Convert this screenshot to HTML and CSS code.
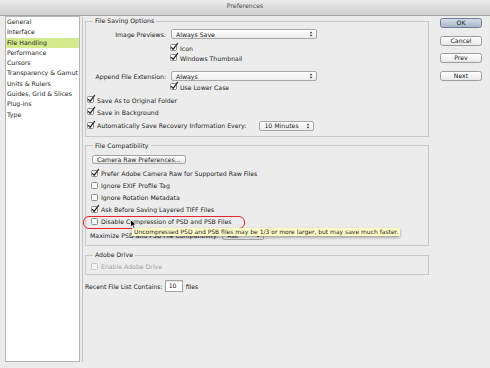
FILE: index.html
```html
<!DOCTYPE html>
<html>
  <head>
    <meta charset="utf-8">
    <title>Preferences</title>
    <link rel="stylesheet" href="styles.css">
  </head>
  <body>
    <div class="titlebar">Preferences</div>
    <div class="content">
      <ul class="nav">
        <li>General</li>
        <li>Interface</li>
        <li class="active">File Handling</li>
        <li>Performance</li>
        <li>Cursors</li>
        <li>Transparency &amp; Gamut</li>
        <li>Units &amp; Rulers</li>
        <li>Guides, Grid &amp; Slices</li>
        <li>Plug-ins</li>
        <li>Type</li>
      </ul>

      <div class="panel">
        <fieldset class="group saving">
          <legend>File Saving Options</legend>
          <div class="row r1">
            <span class="label">Image Previews:</span>
            <span class="select wide">Always Save<svg class="arrows" viewBox="0 0 4 7"><path d="M0.4 2.7 L2 0.6 L3.6 2.7Z M0.4 4.3 L2 6.4 L3.6 4.3Z"/></svg></span>
          </div>
          <div class="row r2 indent">
            <svg class="cb on" viewBox="0 0 9 9"><rect x="0.5" y="1.5" width="6" height="6" rx="1"/><path d="M1.6 4.6 L3.1 6.4 L7.6 0.4"/></svg>
            Icon
          </div>
          <div class="row r3 indent">
            <svg class="cb on" viewBox="0 0 9 9"><rect x="0.5" y="1.5" width="6" height="6" rx="1"/><path d="M1.6 4.6 L3.1 6.4 L7.6 0.4"/></svg>
            Windows Thumbnail
          </div>
          <div class="row r4">
            <span class="label">Append File Extension:</span>
            <span class="select wide">Always<svg class="arrows" viewBox="0 0 4 7"><path d="M0.4 2.7 L2 0.6 L3.6 2.7Z M0.4 4.3 L2 6.4 L3.6 4.3Z"/></svg></span>
          </div>
          <div class="row r5 indent">
            <svg class="cb on" viewBox="0 0 9 9"><rect x="0.5" y="1.5" width="6" height="6" rx="1"/><path d="M1.6 4.6 L3.1 6.4 L7.6 0.4"/></svg>
            Use Lower Case
          </div>
          <div class="row r6 flush">
            <svg class="cb on" viewBox="0 0 9 9"><rect x="0.5" y="1.5" width="6" height="6" rx="1"/><path d="M1.6 4.6 L3.1 6.4 L7.6 0.4"/></svg>
            Save As to Original Folder
          </div>
          <div class="row r7 flush">
            <svg class="cb on" viewBox="0 0 9 9"><rect x="0.5" y="1.5" width="6" height="6" rx="1"/><path d="M1.6 4.6 L3.1 6.4 L7.6 0.4"/></svg>
            Save in Background
          </div>
          <div class="row r8 flush">
            <svg class="cb on" viewBox="0 0 9 9"><rect x="0.5" y="1.5" width="6" height="6" rx="1"/><path d="M1.6 4.6 L3.1 6.4 L7.6 0.4"/></svg>
            Automatically Save Recovery Information Every:
            <span class="select minutes">10 Minutes<svg class="arrows" viewBox="0 0 4 7"><path d="M0.4 2.7 L2 0.6 L3.6 2.7Z M0.4 4.3 L2 6.4 L3.6 4.3Z"/></svg></span>
          </div>
        </fieldset>

        <fieldset class="group compat">
          <legend>File Compatibility</legend>
          <div class="row c1">
            <span class="push">Camera Raw Preferences...</span>
          </div>
          <div class="row c2">
            <svg class="cb on" viewBox="0 0 9 9"><rect x="0.5" y="1.5" width="6" height="6" rx="1"/><path d="M1.6 4.6 L3.1 6.4 L7.6 0.4"/></svg>
            Prefer Adobe Camera Raw for Supported Raw Files
          </div>
          <div class="row c3">
            <svg class="cb" viewBox="0 0 9 9"><rect x="0.5" y="1.5" width="6" height="6" rx="1"/></svg>
            Ignore EXIF Profile Tag
          </div>
          <div class="row c3">
            <svg class="cb" viewBox="0 0 9 9"><rect x="0.5" y="1.5" width="6" height="6" rx="1"/></svg>
            Ignore Rotation Metadata
          </div>
          <div class="row c3">
            <svg class="cb on" viewBox="0 0 9 9"><rect x="0.5" y="1.5" width="6" height="6" rx="1"/><path d="M1.6 4.6 L3.1 6.4 L7.6 0.4"/></svg>
            Ask Before Saving Layered TIFF Files
          </div>
          <div class="row c3">
            <svg class="cb" viewBox="0 0 9 9"><rect x="0.5" y="1.5" width="6" height="6" rx="1"/></svg>
            Disable Compression of PSD and PSB Files
          </div>
          <div class="row c4">
            Maximize PSD and PSB File Compatibility:
            <span class="select ask">Ask<svg class="arrows" viewBox="0 0 4 7"><path d="M0.4 2.7 L2 0.6 L3.6 2.7Z M0.4 4.3 L2 6.4 L3.6 4.3Z"/></svg></span>
          </div>
        </fieldset>

        <fieldset class="group drive">
          <legend>Adobe Drive</legend>
          <div class="row d1 disabled">
            <svg class="cb" viewBox="0 0 9 9"><rect x="0.5" y="1.5" width="6" height="6" rx="1"/></svg>
            Enable Adobe Drive
          </div>
        </fieldset>

        <div class="row recent">
          Recent File List Contains:
          <span class="field">10</span>
          files
        </div>

        <div class="mark"></div>
        <div class="tip">Uncompressed PSD and PSB files may be 1/3 or more larger, but may save much faster.</div>
        <svg class="pointer" viewBox="0 0 7 10"><path d="M0.5 0.5 L0.5 8 L2.3 6.4 L3.6 9.2 L4.9 8.6 L3.6 5.9 L6 5.9 Z"/></svg>
      </div>

      <div class="buttons">
        <span class="btn default">OK</span>
        <span class="btn">Cancel</span>
        <span class="btn">Prev</span>
        <span class="btn">Next</span>
      </div>
    </div>
  </body>
</html>
```

FILE: styles.css
```css
* {
  box-sizing: border-box;
}
html, body {
  margin: 0;
  padding: 0;
}
body {
  width: 490px;
  height: 368px;
  overflow: hidden;
  background: #ececec;
  color: #1c1c1c;
  font-family: "DejaVu Sans", sans-serif;
  font-size: 6.2px;
}

.titlebar {
  height: 16px;
  line-height: 12px;
  text-align: center;
  color: #4a4a4a;
  background: linear-gradient(#ebebeb, #cfcfcf);
  border-bottom: 1px solid #a6a6a6;
}

.content {
  display: flex;
  height: 352px;
}

/* category list */
.nav {
  list-style: none;
  margin: 0 0 0 5px;
  padding: 0;
  width: 75px;
  height: 346px;
  background: #fff;
  border: 1px solid #b6b6b6;
}
.nav li {
  height: 10.3px;
  line-height: 10.3px;
  padding-left: 1px;
  white-space: nowrap;
}
.nav li.active {
  background: #d3ea8d;
}

/* main panel */
.panel {
  position: relative;
  margin: 1px 0 0 2px;
  width: 347px;
  height: 345px;
  padding-left: 2px;
  border-left: 1px solid #c4c4c4;
}

.group {
  margin: 0;
  padding: 0 0 5px 0;
  width: 344px;
  min-width: 0;
  border: 1px solid #c8c8c8;
}
.group legend {
  margin-left: 7px;
  padding: 0 2px;
  line-height: 8px;
}
.compat, .drive {
  margin-top: 5px;
}
.drive {
  padding-bottom: 2.7px;
}

.row {
  display: flex;
  align-items: center;
  height: 10px;
  white-space: nowrap;
}
.label {
  width: 80px;
  margin-right: 5px;
  text-align: right;
}
.indent { padding-left: 84px; }
.flush { padding-left: 1px; }

.r1 { margin-top: 4px; }
.r2 { margin-top: 4px; }
.r4 { margin-top: 8px; }
.r5 { margin-top: 1px; }
.r6 { margin-top: 3px; }
.r7 { margin-top: 2px; }
.r8 { margin-top: 3.5px; }

.c1 { margin-top: 5px; padding-left: 6px; }
.c2 { margin-top: 4.3px; padding-left: 5px; }
.c3 { margin-top: 2px; padding-left: 5px; }
.c4 { margin-top: 3.7px; padding-left: 4px; }
.d1 { margin-top: 2.3px; padding-left: 5px; }

.recent {
  margin-top: 4.7px;
  height: 12px;
}

/* controls */
.cb {
  flex: none;
  width: 9px;
  height: 9px;
  margin: -1px 1px 0 0;
  overflow: visible;
}
.cb rect {
  fill: #fbfbfb;
  stroke: #8c8c8c;
  stroke-width: 1;
}
.cb path {
  fill: none;
  stroke: #2b2b2b;
  stroke-width: 1.3;
  stroke-linecap: round;
  stroke-linejoin: round;
}
.disabled {
  color: #a2a2a2;
}
.disabled .cb rect {
  stroke: #c8c8c8;
  fill: #f3f3f3;
}

.select {
  display: flex;
  align-items: center;
  height: 10px;
  padding: 0 3px 0 4px;
  border: 1px solid #a8a8a8;
  border-radius: 2px;
  background: linear-gradient(#ffffff, #ececec);
  color: #222;
}
.select.wide { width: 146px; }
.select.minutes { width: 55px; margin-left: 13px; }
.select.ask { width: 42px; margin-left: 4px; }
.select .arrows {
  width: 4px;
  height: 6px;
  margin-left: auto;
  fill: #333;
}

.push {
  display: block;
  height: 9.5px;
  line-height: 7.5px;
  padding: 0 4px;
  border: 1px solid #a2a2a2;
  border-radius: 2.5px;
  background: linear-gradient(#ffffff, #e8e8e8);
}

.field {
  width: 18px;
  height: 11.5px;
  margin: 0 3px 0 2px;
  padding-left: 3px;
  line-height: 9.5px;
  background: #fff;
  border: 1px solid #a3a3a3;
  box-shadow: inset 0 1px 1px rgba(0, 0, 0, 0.12);
}

/* overlays */
.mark {
  position: absolute;
  left: 0;
  top: 198.7px;
  width: 162px;
  height: 13.3px;
  border: 1.5px solid #e2262b;
  border-radius: 6px;
}
.tip {
  position: absolute;
  left: 49px;
  top: 210.5px;
  height: 8px;
  line-height: 8px;
  padding: 0 2px;
  font-size: 6px;
  white-space: nowrap;
  color: #222;
  background: #fdfcc6;
  box-shadow: 0 1.5px 3px rgba(0, 0, 0, 0.35);
}
.pointer {
  position: absolute;
  left: 47px;
  top: 202px;
  width: 7px;
  height: 10px;
  fill: #000;
  stroke: #fff;
  stroke-width: 0.7;
}

/* dialog buttons */
.buttons {
  display: flex;
  flex-direction: column;
  width: 42px;
  margin: 2px 0 0 11px;
}
.btn {
  display: block;
  height: 10px;
  margin-bottom: 7.6px;
  line-height: 8px;
  text-align: center;
  border: 1px solid #9c9c9c;
  border-radius: 2.5px;
  background: linear-gradient(#ffffff, #e8e8e8);
}
.btn.default {
  border-color: #6f7f98;
  background: linear-gradient(#d5dce7, #a6b4c8);
}
```
